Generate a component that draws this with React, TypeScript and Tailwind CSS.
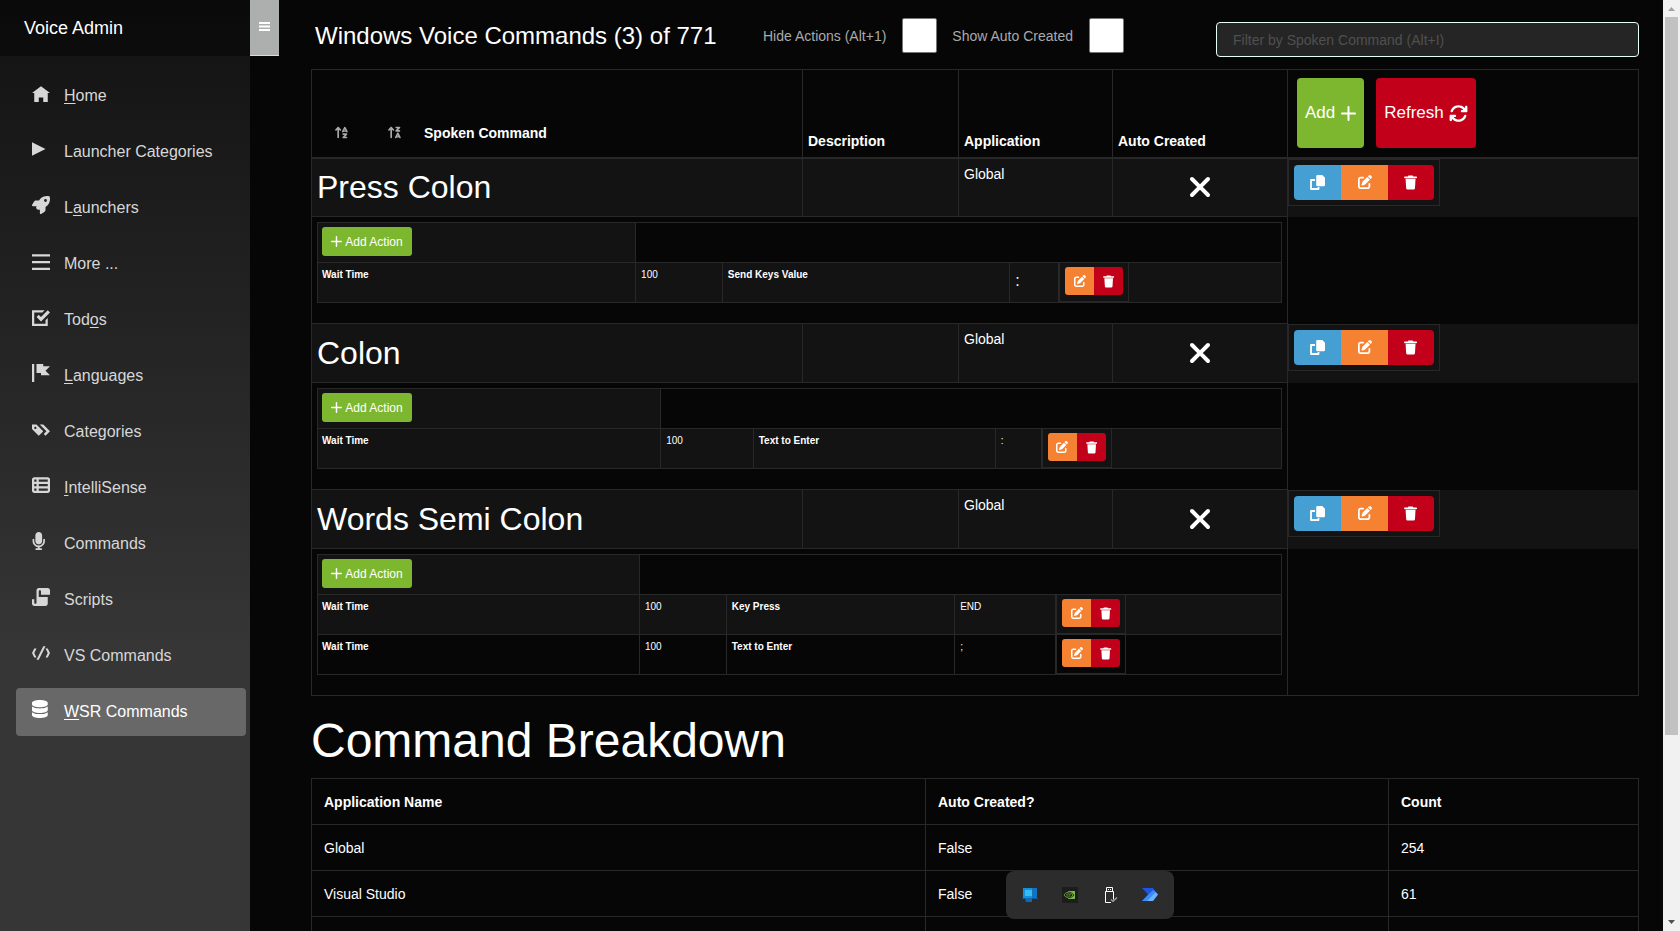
import type { ReactNode } from "react";
import {
  FaArrowUpAZ,
  FaArrowUpZA,
  FaArrowsRotate,
  FaDatabase,
  FaMicrophone,
  FaPenToSquare,
  FaRocket,
  FaTableList,
  FaXmark,
} from "react-icons/fa6";

const glyph = (d: string, y: number) => (
  <svg viewBox={`0 ${-y} 8 8`} className="size-[18px]" fill="currentColor" aria-hidden="true">
    <path fillRule="evenodd" d={d} />
  </svg>
);

type IconProps = { className: string };

function PlusIcon({ className }: IconProps) {
  return (
    <svg viewBox="0 0 15 15" className={className} fill="none" stroke="currentColor" aria-hidden="true">
      <path d="M7.500 1v13M1 7.500h13" strokeWidth="2" strokeLinecap="round" />
    </svg>
  );
}

function CopyIcon({ className }: IconProps) {
  return (
    <svg viewBox="0 0 15 15" className={className} aria-hidden="true">
      <path d="M5 5H1v9h7.500v-2" fill="none" stroke="currentColor" strokeWidth="1.800" strokeLinejoin="round" />
      <path d="M7.500 0h4.800L15 2.700v7.300a1.300 1.300 0 0 1-1.300 1.300H7.500A1.300 1.300 0 0 1 6.200 10V1.300A1.300 1.300 0 0 1 7.500 0z" fill="currentColor" />
    </svg>
  );
}

function TrashIcon({ className }: IconProps) {
  return (
    <svg viewBox="0 0 14 16" className={className} fill="currentColor" aria-hidden="true">
      <path d="M4.800.5h4.400l.8 1h3a.9.9 0 0 1 0 1.900H1a.9.9 0 0 1 0-1.900h3z" />
      <path d="M1.700 4h10.600l-.6 10.100a1.500 1.500 0 0 1-1.500 1.400H3.800a1.500 1.500 0 0 1-1.500-1.400z" />
    </svg>
  );
}

type NavItem = { before?: string; hot?: string; after: string; icon: ReactNode; active?: boolean };

const navItems: NavItem[] = [
  { hot: "H", after: "ome", icon: glyph("M4 0l-4 3h1v4h2v-2h2v2h2v-4.03l1 .03-4-3z", 1) },
  { after: "Launcher Categories", icon: glyph("M0 0v6l6-3-6-3z", 1) },
  { before: "L", hot: "a", after: "unchers", icon: <FaRocket className="size-[18px]" /> },
  { after: "More ...", icon: glyph("M0 0v1h8v-1h-8zm0 3v1h8v-1h-8zm0 3v1h8v-1h-8z", 1) },
  {
    before: "Tod",
    hot: "o",
    after: "s",
    icon: glyph("M0 0v7h7v-3.59l-1 1v1.59h-5v-5h3.59l1-1h-5.59zm7 0l-3 3-1-1-1 1 2 2 4-4-1-1z", 1),
  },
  { hot: "L", after: "anguages", icon: glyph("M0 0v8h1v-8h-1zm2 0v4h2v1h4l-2-1.97 2-2.03h-3v-1h-3z", 0) },
  {
    after: "Categories",
    icon: glyph(
      "M0 0v2l3 3 1.5-1.5.5-.5-2-2-1-1h-2zm3.41 0l3 3-1.19 1.22.78.78 2-2-3-3h-1.59zm-1.91 1c.28 0 .5.22.5.5s-.22.5-.5.5-.5-.22-.5-.5.22-.5.5-.5z",
      2,
    ),
  },
  { hot: "I", after: "ntelliSense", icon: <FaTableList className="size-[18px]" /> },
  { after: "Commands", icon: <FaMicrophone preserveAspectRatio="xMinYMid meet" className="size-[18px]" /> },
  {
    after: "Scripts",
    icon: glyph(
      "M3 0c-.55 0-1 .45-1 1v5.5c0 .28-.22.5-.5.5s-.5-.22-.5-.5v-1.5h-1v2c0 .55.45 1 1 1h5c.55 0 1-.45 1-1v-3h-4v-2.5c0-.28.22-.5.5-.5s.5.22.5.5v1.5h4v-2c0-.55-.45-1-1-1h-4z",
      0,
    ),
  },
  {
    after: "VS Commands",
    icon: glyph("M5 0l-3 6h1l3-6h-1zm-4 1l-1 2 1 2h1l-1-2 1-2h-1zm5 0l1 2-1 2h1l1-2-1-2h-1z", 1),
  },
  {
    hot: "W",
    after: "SR Commands",
    icon: <FaDatabase preserveAspectRatio="xMinYMid meet" className="size-[18px]" />,
    active: true,
  },
];

type Action = { label: string; value: string; large?: boolean };
type Command = { name: string; cols: string[]; actions: Action[] };

const commands: Command[] = [
  {
    name: "Press Colon",
    cols: ["w-[33%]", "w-[9%]", "w-[29.8%]", "w-[5.1%]", ""],
    actions: [{ label: "Send Keys Value", value: ":", large: true }],
  },
  {
    name: "Colon",
    cols: ["w-[35.6%]", "w-[9.6%]", "w-[25.1%]", "w-[4.8%]", ""],
    actions: [{ label: "Text to Enter", value: ":" }],
  },
  {
    name: "Words Semi Colon",
    cols: ["w-[33.4%]", "w-[9%]", "w-[23.7%]", "w-[10.5%]", ""],
    actions: [
      { label: "Key Press", value: "END" },
      { label: "Text to Enter", value: ";" },
    ],
  },
];

const breakdown = [
  ["Global", "False", "254"],
  ["Visual Studio", "False", "61"],
  ["", "", ""],
];

function Sidebar() {
  return (
    <aside className="flex w-[250px] shrink-0 flex-col bg-linear-to-b from-[#121212] to-[#363636] to-70%">
      <div className="flex h-14 shrink-0 items-center bg-black/40 pl-6">
        <a href="#" className="text-lg leading-6 text-white">
          Voice Admin
        </a>
      </div>
      <nav className="flex flex-col gap-2 pt-4 pr-1 pl-4">
        {navItems.map((item) => (
          <a
            key={(item.before ?? "") + (item.hot ?? "") + item.after}
            href="#"
            className={
              item.active
                ? "flex h-12 rounded bg-[#686868] pl-4 text-base leading-12 text-white"
                : "flex h-12 rounded pl-4 text-base leading-12 text-[#d7d7d7]"
            }
          >
            <span className="w-8 shrink-0 pt-3">{item.icon}</span>
            <span>
              {item.before}
              {item.hot && <span className="underline underline-offset-2">{item.hot}</span>}
              {item.after}
            </span>
          </a>
        ))}
      </nav>
    </aside>
  );
}

function ActionTable({ command }: { command: Command }) {
  return (
    <table className="w-full table-fixed border-collapse border border-[#282828] text-[10px] leading-4">
      <colgroup>
        {command.cols.map((c, i) => (
          <col key={i} className={c} />
        ))}
      </colgroup>
      <thead>
        <tr className="h-10">
          <th className="border border-[#282828] bg-[#131313] p-0 pl-1 text-left align-top font-normal">
            <button className="mt-1 flex h-[29px] w-[90px] items-center justify-center gap-[3px] rounded-[3px] bg-[#7db72f] text-xs text-white">
              <PlusIcon className="size-[11px]" />
              Add Action
            </button>
          </th>
          <th colSpan={4} />
        </tr>
      </thead>
      <tbody>
        {command.actions.map((a) => (
          <tr key={a.label} className="h-10 odd:bg-[#131313]">
            <td className="border border-[#282828] px-1 py-1 align-top font-bold">Wait Time</td>
            <td className="border border-[#282828] px-[5px] py-1 align-top">100</td>
            <td className="border border-[#282828] px-[5px] py-1 align-top font-bold">{a.label}</td>
            <td
              className={
                a.large
                  ? "border border-[#282828] px-[5px] pb-1 align-middle text-base leading-4"
                  : "border border-[#282828] px-[5px] py-1 align-top"
              }
            >
              {a.value}
            </td>
            <td className="border-y border-[#282828] p-0 align-top">
              <div className="flex h-[39px] w-[70px] border border-t-0 border-[#282828] pt-1 pl-[5px]">
                <button
                  aria-label="Edit action"
                  className="flex h-7 w-[29px] items-center justify-center rounded-l-[3px] bg-[#f58233] text-white"
                >
                  <FaPenToSquare className="size-3" />
                </button>
                <button
                  aria-label="Delete action"
                  className="flex h-7 w-[29px] items-center justify-center rounded-r-[3px] bg-[#c30019] text-white"
                >
                  <TrashIcon className="h-[13px] w-auto" />
                </button>
              </div>
            </td>
          </tr>
        ))}
      </tbody>
    </table>
  );
}

function CommandRows({ command }: { command: Command }) {
  return (
    <>
      <tr className="h-[59px] bg-[#131313]">
        <td className="border border-[#282828] px-[5px] text-[32px] leading-10">{command.name}</td>
        <td className="border border-[#282828]" />
        <td className="border border-[#282828] px-[5px] pt-[5px] align-top leading-5">Global</td>
        <td className="border border-[#282828]">
          <FaXmark className="mx-auto h-8 w-auto" title="No" />
        </td>
        <td className="border-x border-[#282828] p-0 align-top">
          <div className="flex h-[47px] w-[152px] border border-[#282828] pt-[5px] pl-[5px]">
            <button
              aria-label="Copy command"
              className="flex h-[35px] w-[47px] items-center justify-center rounded-l bg-[#459fd3] text-white"
            >
              <CopyIcon className="size-[15px]" />
            </button>
            <button
              aria-label="Edit command"
              className="flex h-[35px] w-[47px] items-center justify-center bg-[#f58233] text-white"
            >
              <FaPenToSquare className="size-[14px]" />
            </button>
            <button
              aria-label="Delete command"
              className="flex h-[35px] w-[46px] items-center justify-center rounded-r bg-[#c30019] text-white"
            >
              <TrashIcon className="h-[15px] w-auto" />
            </button>
          </div>
        </td>
      </tr>
      <tr>
        <td colSpan={4} className="border border-[#282828] px-[5px] pt-[5px] pb-5 align-top">
          <ActionTable command={command} />
        </td>
        <td className="border-x border-[#282828]" />
      </tr>
    </>
  );
}

function CommandTable() {
  return (
    <table className="w-full table-fixed border-collapse border border-[#282828] text-sm">
      <colgroup>
        <col />
        <col className="w-[156px]" />
        <col className="w-[154px]" />
        <col className="w-[175px]" />
        <col className="w-[351px]" />
      </colgroup>
      <thead>
        <tr className="h-[88px] text-left">
          <th className="border border-b-2 border-[#282828] px-[5px] pb-3 align-bottom">
            <div className="flex items-center pl-4 leading-6">
              <button aria-label="Sort ascending" className="flex w-[53px] pl-px text-[#aaa]">
                <FaArrowUpAZ className="size-[15px]" />
              </button>
              <button aria-label="Sort descending" className="flex w-[38px] pl-px text-[#aaa]">
                <FaArrowUpZA className="size-[15px]" />
              </button>
              Spoken Command
            </div>
          </th>
          <th className="border border-b-2 border-[#282828] px-[5px] pb-[6px] align-bottom">Description</th>
          <th className="border border-b-2 border-[#282828] px-[5px] pb-[6px] align-bottom">Application</th>
          <th className="border border-b-2 border-[#282828] px-[5px] pb-[6px] align-bottom">Auto Created</th>
          <th className="border border-b-2 border-[#282828] pt-2 pl-[9px] align-top font-normal">
            <div className="flex gap-3">
              <button className="flex h-[70px] items-center gap-[6px] rounded bg-[#7db72f] px-2 text-[17px] text-white">
                Add <PlusIcon className="size-[15px]" />
              </button>
              <button className="flex h-[70px] items-center gap-[5px] rounded bg-[#c30019] px-2 text-[17px] text-white">
                Refresh <FaArrowsRotate className="size-[19px]" />
              </button>
            </div>
          </th>
        </tr>
      </thead>
      <tbody>
        {commands.map((c) => (
          <CommandRows key={c.name} command={c} />
        ))}
      </tbody>
    </table>
  );
}

function BreakdownTable() {
  return (
    <table className="w-full table-fixed border-collapse border border-[#282828] text-sm">
      <colgroup>
        <col />
        <col className="w-[463px]" />
        <col className="w-[250px]" />
      </colgroup>
      <thead>
        <tr className="h-[46px] text-left">
          {["Application Name", "Auto Created?", "Count"].map((h) => (
            <th key={h} className="border border-[#282828] px-3">
              {h}
            </th>
          ))}
        </tr>
      </thead>
      <tbody>
        {breakdown.map((row, i) => (
          <tr key={i} className="h-[46px]">
            {row.map((cell, j) => (
              <td key={j} className="border border-[#282828] px-3">
                {cell}
              </td>
            ))}
          </tr>
        ))}
      </tbody>
    </table>
  );
}

function Scrollbar() {
  return (
    <div className="flex w-[17px] shrink-0 flex-col items-center bg-[#f1f1f1]" aria-hidden="true">
      <svg viewBox="0 0 17 17" className="size-[17px] shrink-0">
        <path d="M8.5 7L12 11H5z" fill="#a3a3a3" />
      </svg>
      <div className="w-full grow px-0.5">
        <div className="h-4/5 bg-[#c1c1c1]" />
      </div>
      <svg viewBox="0 0 17 17" className="size-[17px] shrink-0">
        <path d="M5 6h7L8.5 10z" fill="#505050" />
      </svg>
    </div>
  );
}

function Tray() {
  return (
    <div className="absolute bottom-3 left-[1006px] flex h-12 items-center gap-6 rounded-lg bg-[#2c2c2c] px-4">
      <svg viewBox="0 0 16 16" className="size-4">
        <path d="M1 1h14v11H1z" fill="#1273c0" />
        <path d="M1 1h9v10H1z" fill="#1590dc" />
        <path d="M3 3h7v6H3z" fill="#35bdf1" />
        <path d="M0 11h16v1H0z" fill="#0a5a9c" />
        <path d="M3 11h7v4H4z" fill="#0f6ab4" />
      </svg>
      <svg viewBox="0 0 16 16" className="size-4">
        <path d="M0 0h16v16H0z" fill="#1d1d1d" />
        <path d="M6 4h7v8H6z" fill="#76b93f" />
        <path
          d="M2 8c2-3.500 6-3.500 9 0-2.500 3.500-6.500 3.500-9 0zM4.500 8c1-1.600 3-1.600 4 0-1 1.600-3 1.600-4 0z"
          fill="#1d1d1d"
          stroke="#76b93f"
          strokeWidth=".8"
        />
        <path d="M6 5.200c3 0 4.500 1.300 6 2.800-1.500 1.800-3 2.600-6 2.800" fill="none" stroke="#1d1d1d" strokeWidth=".8" />
      </svg>
      <svg viewBox="0 0 16 16" className="size-4" fill="none">
        <path d="M4.500 4.500v-4h6v4M3.500 4.500h8v8M3.500 4.500v11H9" stroke="#fff" />
        <path d="M6 2h1v1H6zM8 2h1v1H8z" fill="#fff" />
        <path d="M9 12.500l2 2 4-4" stroke="#aaa" strokeWidth="1.200" />
      </svg>
      <svg viewBox="0 0 16 16" className="size-4">
        <path d="M0 1h11l5 6.500L11 14H0l6-6.500z" fill="#1c55e0" />
        <path d="M0 14L11 3l2.500 2L5 14z" fill="#3f8cf5" />
        <path d="M5 14l8.500-9L16 7.500 11 14z" fill="#69b4fb" />
      </svg>
    </div>
  );
}

export default function App() {
  return (
    <div className="relative flex h-screen overflow-hidden bg-[#060606] font-['Liberation_Sans',Arial,sans-serif] text-white">
      <Sidebar />
      <button
        aria-label="Toggle menu"
        className="flex h-14 w-[29px] shrink-0 items-start justify-center border-b border-[#ddd] bg-[#adafae] pt-[22px]"
      >
        <svg viewBox="0 0 11 9" className="h-[9px] w-[11px]" fill="#fff" aria-hidden="true">
          <path d="M0 0h11v2H0zM0 3.500h11v2H0zM0 7h11v2H0z" />
        </svg>
      </button>
      <main className="flex min-w-0 grow flex-col pr-6 pl-8">
        <header className="flex h-[69px] shrink-0 items-start text-sm text-[#aaa]">
          <h1 className="w-[452px] shrink-0 pt-5 pl-1 text-2xl leading-8 text-white">
            Windows Voice Commands (3) of 771
          </h1>
          <div className="flex items-center pt-[18px]">
            <label htmlFor="hide-actions" className="mr-4">
              Hide Actions (Alt+1)
            </label>
            <input
              id="hide-actions"
              type="checkbox"
              className="mr-[15px] size-[35px] appearance-none rounded-xs border border-[#767676] bg-white"
            />
            <label htmlFor="show-auto" className="mr-4">
              Show Auto Created
            </label>
            <input
              id="show-auto"
              type="checkbox"
              className="size-[35px] appearance-none rounded-xs border border-[#767676] bg-white"
            />
          </div>
          <input
            type="text"
            aria-label="Filter by Spoken Command"
            placeholder="Filter by Spoken Command (Alt+I)"
            className="mt-[22px] ml-auto h-[35px] w-[423px] rounded border border-[#e8fff8] bg-[#252525] px-4 text-white placeholder:text-[#505050]"
          />
        </header>
        <CommandTable />
        <h2 className="mt-4 mb-2 shrink-0 text-5xl leading-[58px]">Command Breakdown</h2>
        <BreakdownTable />
      </main>
      <Scrollbar />
      <Tray />
    </div>
  );
}
